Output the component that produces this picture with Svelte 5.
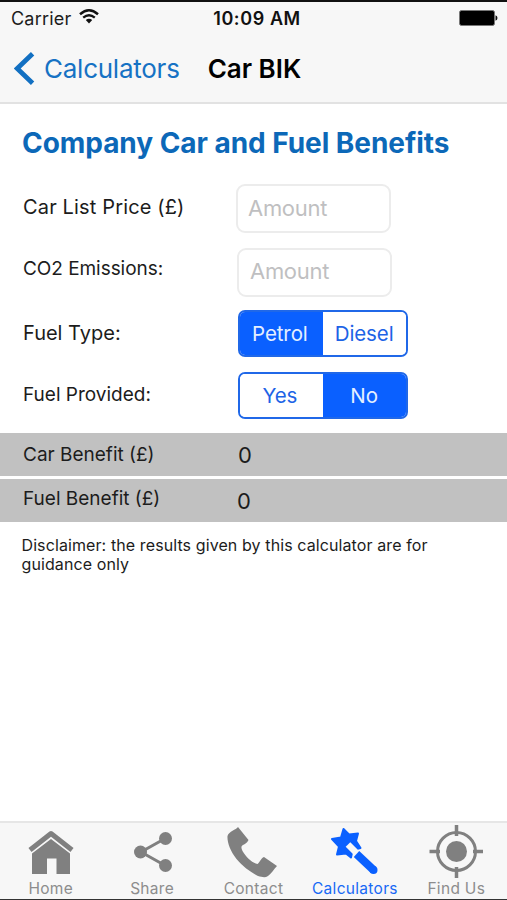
<script>
  let fuelType = "Petrol";
  let fuelProvided = "No";
  let listPrice = "";
  let emissions = "";

  let carBenefit = 0;
  let fuelBenefit = 0;

  let currentTab = "calculators";

  const tabs = [
    { id: "home", text: "Home" },
    { id: "share", text: "Share" },
    { id: "contact", text: "Contact" },
    { id: "calculators", text: "Calculators" },
    { id: "find", text: "Find Us" }
  ];
</script>

<style>
  :global(body) {
    margin: 0;
    background: #fff;
  }

  .screen {
    width: 507px;
    height: 900px;
    box-sizing: border-box;
    display: flex;
    flex-direction: column;
    overflow: hidden;
    border-top: 2px solid #111;
    border-bottom: 1px solid #333;
    background: #fff;
    color: #1c1c1c;
    font-family: Inter, "Liberation Sans", sans-serif;
  }

  button {
    margin: 0;
    padding: 0;
    border: 0;
    background: none;
    font-family: inherit;
    color: inherit;
  }

  svg {
    display: block;
  }

  header {
    height: 102px;
    box-sizing: border-box;
    border-bottom: 2px solid #e2e2e2;
    background: #f7f7f7;
  }

  .status {
    height: 32px;
    display: grid;
    grid-template-columns: 1fr auto 1fr;
    align-items: center;
    padding: 0 9px 0 11px;
    font-size: 18px;
  }

  .carrier {
    display: flex;
    align-items: center;
    gap: 8px;
    letter-spacing: .2px;
  }

  .carrier svg {
    margin-top: -3px;
  }

  .time {
    padding-left: 5px;
    font-weight: 600;
    font-size: 18px;
    letter-spacing: .6px;
    color: #111;
  }

  .battery {
    justify-self: end;
  }

  .nav {
    display: flex;
    align-items: center;
    height: 68px;
    padding-left: 14px;
  }

  .back {
    display: flex;
    align-items: center;
    gap: 9px;
    font-size: 26px;
    letter-spacing: -.25px;
    color: #1672c4;
  }

  .nav h1 {
    margin: 0 0 0 28px;
    font-size: 26px;
    font-weight: 600;
    color: #000;
  }

  main {
    flex: 1;
  }

  h2 {
    margin: 0;
    padding: 22px 0 0 22px;
    height: 58px;
    box-sizing: border-box;
    font-size: 28px;
    line-height: 34px;
    font-weight: 700;
    letter-spacing: -.05px;
    white-space: nowrap;
    color: #0c68b8;
  }

  .form {
    padding-top: 22px;
    display: grid;
    grid-template-columns: 213px 172px;
    grid-template-rows: 63.500px 62.500px 61.500px 61.500px;
    padding-left: 23px;
  }

  .form label,
  .form .label {
    font-size: 19px;
    line-height: 24px;
    padding-top: 11px;
  }

  .form .price {
    font-size: 20px;
    letter-spacing: .15px;
  }

  .form .co2 {
    padding-top: 9px;
    letter-spacing: -.05px;
  }

  .form .type {
    font-size: 20px;
  }

  input {
    box-sizing: border-box;
    width: 155px;
    height: 49px;
    padding: 0 10px 2px;
    border: 2px solid #ececec;
    border-radius: 9px;
    background: #fff;
    font-family: inherit;
    font-size: 22px;
    letter-spacing: -.3px;
    outline: none;
  }

  input::placeholder {
    color: #bfbfc1;
    opacity: 1;
  }

  .shifted {
    margin-left: 1px;
    padding-left: 11px;
  }

  .segments {
    margin-left: 2px;
    box-sizing: border-box;
    width: 169.500px;
    height: 47px;
    display: grid;
    grid-template-columns: 1fr 1fr;
    border: 2px solid #2068e8;
    border-radius: 7px;
    overflow: hidden;
  }

  .segments button {
    font-size: 20.500px;
    letter-spacing: -.1px;
    color: #1d63e6;
    background: #fff;
  }

  .segments button.selected {
    background: #0a60ff;
    color: #e4efff;
  }

  .segments button:first-child {
    padding-right: 3px;
  }

  .result {
    display: grid;
    grid-template-columns: 215px 1fr;
    align-items: center;
    box-sizing: border-box;
    height: 43px;
    margin-bottom: 3px;
    padding-left: 23px;
    background: #c1c1c1;
    font-size: 19px;
  }

  .result.fuel {
    grid-template-columns: 214px 1fr;
    padding-bottom: 5px;
  }

  .result output {
    font-size: 22px;
  }

  .result.fuel output {
    padding-top: 5px;
  }

  .disclaimer {
    margin: 14px 0 0 21.500px;
    width: 430px;
    font-size: 16px;
    line-height: 18.500px;
    letter-spacing: .1px;
  }

  .tabs {
    height: 78px;
    box-sizing: border-box;
    display: grid;
    grid-template-columns: repeat(5, 1fr);
    border-top: 2px solid #e6e6e6;
    background: #f7f7f7;
  }

  .tabs button {
    display: flex;
    flex-direction: column;
    align-items: center;
    font-size: 15.500px;
    line-height: 20px;
    letter-spacing: .3px;
    color: #8d8d8d;
  }

  .tabs button.current {
    color: #1769f5;
  }
</style>

<div class="screen">
  <header>
    <div class="status">
      <div class="carrier">
        <span>Carrier</span>
        <svg width="20" height="15" viewBox="0 0 20 15">
          <path d="M1 5.200Q10-2.600 19 5.200" fill="none" stroke="#111" stroke-width="2.500" />
          <path d="M4.200 8.700Q10 3.800 15.800 8.700" fill="none" stroke="#111" stroke-width="2.300" />
          <path d="M6.800 11Q10 8.400 13.200 11L10 14.400Z" fill="#111" />
        </svg>
      </div>
      <span class="time">10:09 AM</span>
      <svg class="battery" width="39" height="16" viewBox="0 0 39 16">
        <rect x=".5" y=".5" width="35" height="15" rx="2" fill="#000" stroke="#777" />
        <path d="M36.500 5.300q2 .6 2 2.700t-2 2.700z" fill="#111" />
      </svg>
    </div>
    <div class="nav">
      <button class="back">
        <svg width="21" height="33" viewBox="0 0 21 33">
          <path d="M18.600 1.800L3.200 16.500L18.600 31.200" fill="none" stroke="#1270c2" stroke-width="4.800" />
        </svg>
        <span>Calculators</span>
      </button>
      <h1>Car BIK</h1>
    </div>
  </header>

  <main>
    <h2>Company Car and Fuel Benefits</h2>
    <div class="form">
      <label class="price" for="price">Car List Price (£)</label>
      <input id="price" placeholder="Amount" bind:value={listPrice} />
      <label class="co2" for="co2">CO2 Emissions:</label>
      <input id="co2" class="shifted" placeholder="Amount" bind:value={emissions} />
      <span class="label type">Fuel Type:</span>
      <div class="segments">
        {#each ["Petrol", "Diesel"] as option}
          <button class:selected={fuelType === option} on:click={() => fuelType = option}>{option}</button>
        {/each}
      </div>
      <span class="label">Fuel Provided:</span>
      <div class="segments">
        {#each ["Yes", "No"] as option}
          <button class:selected={fuelProvided === option} on:click={() => fuelProvided = option}>{option}</button>
        {/each}
      </div>
    </div>

    <div class="result">
      <span>Car Benefit (£)</span>
      <output>{carBenefit}</output>
    </div>
    <div class="result fuel">
      <span>Fuel Benefit (£)</span>
      <output>{fuelBenefit}</output>
    </div>
    <p class="disclaimer">Disclaimer: the results given by this calculator are for guidance only</p>
  </main>

  <nav class="tabs">
    {#each tabs as tab}
      <button class:current={currentTab === tab.id} on:click={() => currentTab = tab.id}>
        <svg width="60" height="56" viewBox="0 0 60 56" fill="#808080">
          {#if tab.id === "home"}
            <path d="M9 27L30 10.500L51 27" fill="none" stroke="#808080" stroke-width="5" stroke-linejoin="round" />
            <path d="M11 30.500L30 16L49 30.500V51H35.500V35.500H26V51H11Z" />
          {:else if tab.id === "share"}
            <path d="M44 15L19 29L44 43" fill="none" stroke="#808080" stroke-width="3" />
            <circle cx="43.500" cy="15.500" r="6.500" />
            <circle cx="18.500" cy="29" r="6.500" />
            <circle cx="43.500" cy="42.500" r="6.500" />
          {:else if tab.id === "contact"}
            <path d="M15 4C13 7 6 8 4.500 13C4 19 7 28 13.500 36C20 44 29 50 35 53C39 54 42 55 45 53C48 51 51 46 54 43L41 34C38 35 37 39 34.500 41C29 40 23 34 19.500 28C18 25 18 23 20 22C22 21 24 20 25.500 17Z" />
          {:else if tab.id === "calculators"}
            <path d="M18.500 6L24 11.500L33 10.500L31 18L35.500 25L27.500 27L26 34.500L21 30.500L12 31.500L14 23.500L7 16L16 14.500Z" fill="#0a60ff" stroke="#0a60ff" stroke-width="2" stroke-linejoin="round" />
            <path d="M23 21.500L30.500 29" fill="none" stroke="#f7f7f7" stroke-width="6.500" />
            <path d="M31.500 31L48.500 47" fill="none" stroke="#0a60ff" stroke-width="8" />
            <circle cx="48.500" cy="47" r="4" fill="#0a60ff" />
          {:else}
            <circle cx="30.500" cy="28.500" r="19" fill="none" stroke="#808080" stroke-width="3" />
            <circle cx="30.500" cy="28.500" r="10.500" />
            <path d="M30.500 2V13M30.500 44V55M3.500 28.500H14M47 28.500H57" stroke="#808080" stroke-width="3.500" />
          {/if}
        </svg>
        <span>{tab.text}</span>
      </button>
    {/each}
  </nav>
</div>
